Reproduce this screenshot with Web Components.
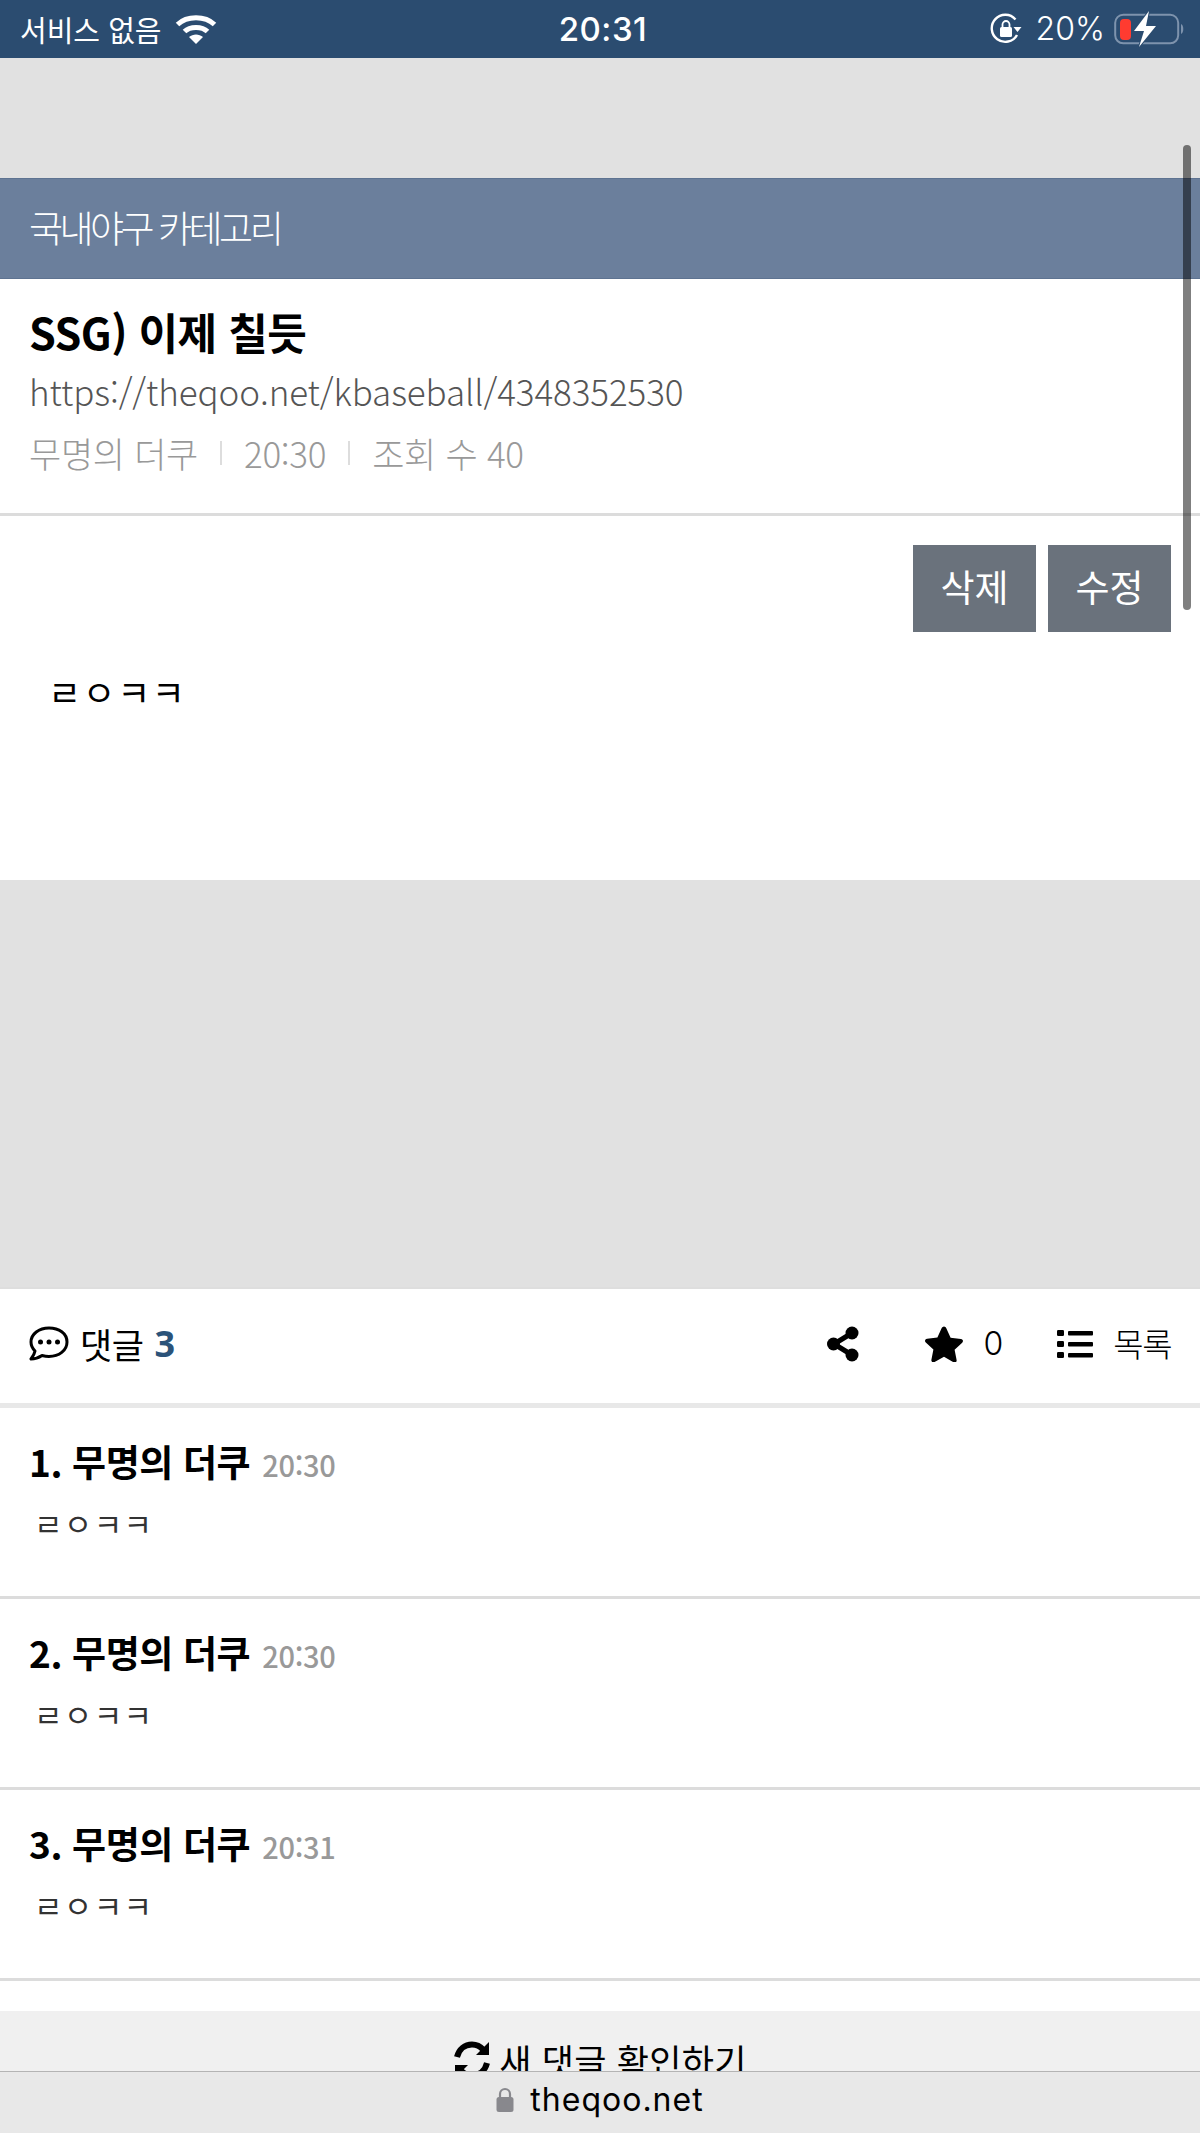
<!DOCTYPE html>
<html lang="ko"><head><meta charset="utf-8"><title>theqoo</title>
<style>
html,body{margin:0;padding:0}
body{width:1200px;height:2133px;overflow:hidden;position:relative;background:#fff;font-family:"Noto Sans CJK KR","Noto Sans",sans-serif;color:#000}
</style></head><body>
<status-bar></status-bar>
<gray-gap h="120"></gray-gap>
<category-bar>국내야구 카테고리</category-bar>
<post-header title="SSG) 이제 칠듯" url="https://theqoo.net/kbaseball/4348352530" author="무명의 더쿠" time="20:30" views="조회 수 40"></post-header>
<post-body>ㄹㅇㅋㅋ</post-body>
<gray-gap h="409"></gray-gap>
<comment-toolbar></comment-toolbar>
<comment-item num="1." time="20:30">ㄹㅇㅋㅋ</comment-item>
<comment-item num="2." time="20:30">ㄹㅇㅋㅋ</comment-item>
<comment-item num="3." time="20:31">ㄹㅇㅋㅋ</comment-item>
<refresh-bar></refresh-bar>
<url-bar></url-bar>
<scroll-indicator></scroll-indicator>
<script>
const F='"Noto Sans CJK KR","Noto Sans",sans-serif';
function def(name,html,init){customElements.define(name,class extends HTMLElement{constructor(){super();this.attachShadow({mode:'open'})}connectedCallback(){let h=typeof html==='function'?html(this):html;this.shadowRoot.innerHTML=h}})}
def('status-bar',`<style>
:host{display:grid;grid-template-columns:1fr auto 1fr;align-items:center;height:58px;background:#2b4c70;color:#fff;padding:0 14px 0 20px;box-sizing:border-box;font:400 29px/1 ${F}}
.l,.r{display:flex;align-items:center}
.r{justify-content:flex-end}
.t{font:500 33px/1 "Inter","Noto Sans",sans-serif;letter-spacing:.5px}
.p{font:300 32px/1 "Inter","Noto Sans",sans-serif;margin:0 9px 0 14px}
svg{display:block}
</style>
<div class="l"><span>서비스 없음</span><svg style="margin-left:13px" width="42" height="34" viewBox="0 0 42 34"><path d="M2.5 12.5C12 3.5 30 3.5 39.500 12.500" fill="none" stroke="#fff" stroke-width="5"/><path d="M9.500 19.500C15 14 27 14 32.500 19.500" fill="none" stroke="#fff" stroke-width="5"/><path d="M21 32l-7-7c4-3.500 10-3.500 14 0z" fill="#fff"/></svg></div>
<div class="t">20:31</div>
<div class="r"><svg width="32" height="32" viewBox="0 0 32 32"><path d="M27 22A13.500 13.500 0 1 1 25.500 6.500" fill="none" stroke="#fff" stroke-width="2.400"/><path d="M23.500 14h8l-4 5z" fill="#fff"/><rect x="10" y="14" width="12" height="10" rx="1.500" fill="#fff"/><path d="M12.500 14v-2.500a3.500 3.500 0 0 1 7 0V14" fill="none" stroke="#fff" stroke-width="1.800"/></svg><span class="p">20%</span>
<svg width="72" height="36" viewBox="0 0 72 36"><rect x="1.200" y="3.800" width="63" height="28.500" rx="8" fill="none" stroke="#7e93ad" stroke-width="2"/><path d="M67 13c3 1 3 9 0 10z" fill="#7e93ad"/><rect x="6" y="8" width="11" height="21" rx="4" fill="#ff3b30"/><path d="M35 0 20 20h10l-5 16 17-21H32z" fill="#fff" stroke="#2b4c70" stroke-width="2" paint-order="stroke"/></svg></div>`);
def('gray-gap',e=>`<style>:host{display:block;height:${e.getAttribute('h')}px;background:#e1e1e1}</style>`);
def('category-bar',`<style>:host{display:flex;align-items:center;height:101px;box-sizing:border-box;padding:0 29px 3px;background:#6b7f9c;color:#fff;font:300 37px/1 ${F};letter-spacing:-3.500px;border-top:1px solid #5e7391;border-bottom:1px solid #5e7391}</style><slot></slot>`);
def('post-header',e=>`<style>:host{display:block;height:237px;box-sizing:border-box;padding:24px 29px 0;border-bottom:3px solid #dcdcdc;background:#fff}
h1{margin:0;font:700 43px/56px ${F};letter-spacing:-.5px;color:#000}
.u{font:300 35px/46px ${F};color:#555;margin-top:9px;letter-spacing:-.1px}
.m{display:flex;align-items:center;font:300 35px/46px ${F};color:#999;margin-top:16px;letter-spacing:-.3px}
i{width:2px;height:24px;background:#ddd;margin:0 22px}
</style><h1>${e.getAttribute('title')}</h1><div class="u">${e.getAttribute('url')}</div><div class="m"><span>${e.getAttribute('author')}</span><i></i><span>${e.getAttribute('time')}</span><i></i><span>${e.getAttribute('views')}</span></div>`);
def('post-body',`<style>:host{display:block;height:364px;box-sizing:border-box;padding:29px 29px 0;background:#fff}
.b{display:flex;justify-content:flex-end;gap:12px}
span{display:flex;align-items:center;justify-content:center;width:123px;height:87px;background:#6a727c;color:#fff;font:400 37px/1 ${F};padding-bottom:4px;box-sizing:border-box}
p{margin:32px 0 0 19px;font:400 36px/54px ${F};color:#000;letter-spacing:1.500px}
</style><div class="b"><span>삭제</span><span>수정</span></div><p><slot></slot></p>`);
const ic={
share:`<svg width="34" height="36" viewBox="0 0 34 36"><path d="M26 7 8 18l18 11" fill="none" stroke="#000" stroke-width="5"/><circle cx="26" cy="7" r="6.500"/><circle cx="7.500" cy="18" r="6.500"/><circle cx="26" cy="29" r="6.500"/></svg>`,
star:`<svg width="38" height="36" viewBox="0 0 38 36"><path d="M19 0.500c1 0 1.800.8 2.300 1.800l4.300 9.500 10.300 1.200c2 .3 2.800 2.300 1.300 3.700l-7.600 7 2 10.200c.4 2-1.500 3.300-3.200 2.300L19 30.800 9.600 36c-1.700 1-3.600-.3-3.200-2.300l2-10.200-7.600-7c-1.500-1.400-.7-3.400 1.300-3.700l10.300-1.200 4.300-9.500C17.200 1.300 18 .5 19 .5z"/></svg>`,
list:`<svg width="36" height="30" viewBox="0 0 36 30"><rect x="0" y="1" width="7" height="6" rx="1.200"/><rect x="0" y="12" width="7" height="6" rx="1.200"/><rect x="0" y="23" width="7" height="6" rx="1.200"/><rect x="11" y="2" width="25" height="4.500" rx="1"/><rect x="11" y="13" width="25" height="4.500" rx="1"/><rect x="11" y="24" width="25" height="4.500" rx="1"/></svg>`,
talk:`<svg width="40" height="36" viewBox="0 0 40 36"><path d="M20 2C10 2 2 8 2 16c0 3.500 1.500 6.500 4 9-.5 3-2.500 6-4 8 4 0 8-1.500 11-3.500 2.200.6 4.500 1 7 1 10 0 18-6 18-14.500S30 2 20 2z" fill="none" stroke="#000" stroke-width="3" stroke-linejoin="round"/><circle cx="11.500" cy="16" r="2.500"/><circle cx="20" cy="16" r="2.500"/><circle cx="28.500" cy="16" r="2.500"/></svg>`};
def('comment-toolbar',`<style>:host{display:flex;align-items:center;height:121px;box-sizing:border-box;padding:0 29px 5px;background:#fff;border-top:2px solid #dedede;border-bottom:5px solid #e8e8e8;margin-top:-2px;position:relative;font:400 35px/1 ${F}}
svg{display:block;flex:none}
.h{display:flex;align-items:center;letter-spacing:-.5px}
.h b{color:#2b5379;font:700 36px/1 "Open Sans",sans-serif;margin-left:11px}
.h span{margin-left:11px}
.a{margin-left:auto;display:flex;align-items:center}
.n{font:300 32px/1 "Inter",sans-serif;margin:0 54px 0 21px}
.s{margin-right:65px}
.w{font-size:33px;margin-left:20px;letter-spacing:-1.500px;font-weight:300}
</style><div class="h">${ic.talk}<span>댓글</span><b>3</b></div><div class="a"><span class="s">${ic.share}</span>${ic.star}<span class="n">0</span>${ic.list}<span class="w">목록</span></div>`);
def('comment-item',e=>`<style>:host{display:block;height:191px;box-sizing:border-box;padding:27px 29px 0;border-bottom:3px solid #dcdcdc;background:#fff}
.t{display:flex;align-items:baseline;font:700 37px/52px ${F};letter-spacing:-.4px}
.t span{font:500 29px/1 ${F};color:#999;margin-left:12px;letter-spacing:-.3px}
.c{margin:14px 0 0 5px;font:400 31px/44px ${F};color:#333;letter-spacing:1.300px}
</style><div class="t">${e.getAttribute('num')} 무명의 더쿠<span>${e.getAttribute('time')}</span></div><div class="c"><slot></slot></div>`);
def('refresh-bar',`<style>:host{display:flex;justify-content:center;align-items:flex-start;gap:8px;margin-top:30px;height:90px;box-sizing:border-box;padding:27px 0 0 0;background:#f0f0f0;font:400 35px/44px ${F};color:#000;letter-spacing:.3px}
svg{display:block;margin-top:3px;flex:none}</style>
<svg width="38" height="38" viewBox="0 0 38 38"><path d="M4 16C6 8 12 3.500 19 3.500c4.500 0 8 1.500 11 5" fill="none" stroke="#000" stroke-width="6"/><path d="M36 1v13H23z"/><path d="M34 22c-2 8-8 12.500-15 12.500-4.500 0-8-1.500-11-5" fill="none" stroke="#000" stroke-width="6"/><path d="M2 37V24h13z"/></svg><span>새 댓글 확인하기</span>`);
def('url-bar',`<style>:host{position:absolute;left:0;right:0;bottom:0;height:62px;box-sizing:border-box;display:flex;justify-content:center;align-items:center;gap:16px;background:#e8e8e8;border-top:1px solid #b4b4b4;padding:0 0 6px 0;font:400 32px/1 "Inter","Noto Sans",sans-serif;letter-spacing:1px;color:#000}
svg{display:block}</style><svg width="18" height="25" viewBox="0 0 18 25"><path d="M4 11V7a5 5 0 0 1 10 0v4" fill="none" stroke="#88888d" stroke-width="2.200"/><rect x="0.500" y="10" width="17" height="15" rx="2.500" fill="#88888d"/></svg><span>theqoo.net</span>`);
def('scroll-indicator',`<style>:host{position:absolute;left:1183px;top:145px;width:8px;height:465px;border-radius:4px;background:rgba(0,0,0,.5)}</style>`);
</script></body></html>
